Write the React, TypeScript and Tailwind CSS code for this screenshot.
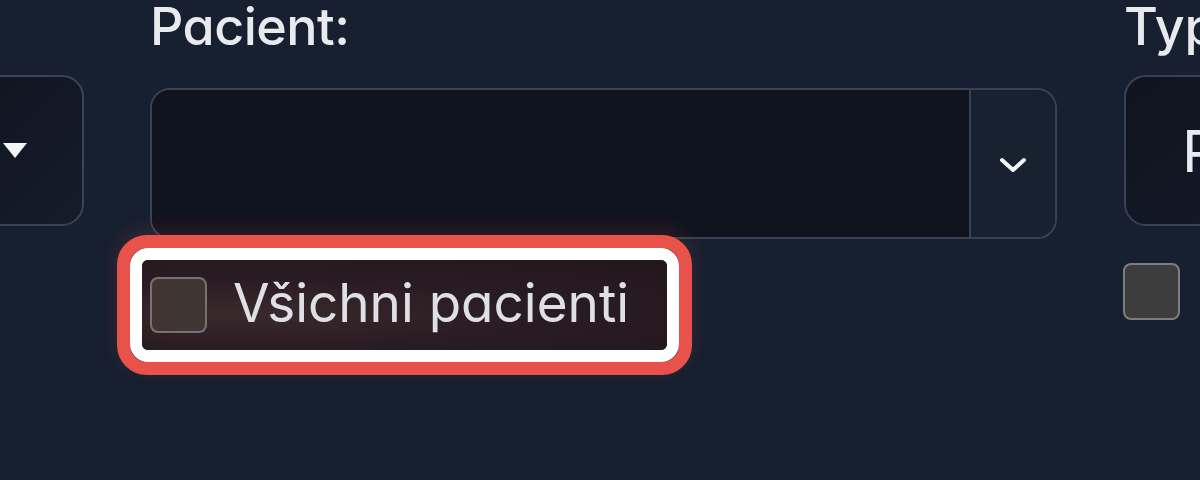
import React from 'react';

const font = "font-['Inter','Liberation_Sans',sans-serif] [font-feature-settings:'cv11']";

const Chevron: React.FC = () => (
  <svg width="28" height="16" viewBox="0 0 28 16" fill="none" aria-hidden="true">
    <path d="M3 3l11 10L25 3" stroke="#f3f4f6" strokeWidth="4" strokeLinecap="round" strokeLinejoin="round" />
  </svg>
);

const Triangle: React.FC = () => (
  <svg width="26" height="17" viewBox="0 0 26 17" aria-hidden="true">
    <path d="M1 1h24L13 16z" fill="#f3f4f6" />
  </svg>
);

const App: React.FC = () => {
  return (
    <div className={`w-[1200px] h-[480px] overflow-hidden bg-[#172030] ${font}`}>
      <div className="flex items-start pt-[4px]">
        {/* left column (cut off) */}
        <div className="shrink-0 -ml-[60px] mt-[71px] w-[144px] h-[151px] rounded-[22px] border-2 border-[#3b4455] bg-gradient-to-br from-[#0f1420] to-[#151c2a] flex items-center justify-end pr-[54px]">
          <Triangle />
        </div>

        {/* patient column */}
        <div className="shrink-0 ml-[66px] w-[907px] flex flex-col">
          <label className="h-[50px] text-[52px] leading-[50px] font-medium text-[#e8eaee] tracking-[-0.5px] -mt-[2px]">
            Pacient:
          </label>
          <div className="mt-[36px] h-[151px] flex rounded-[20px] border-2 border-[#394252] overflow-hidden">
            <div className="flex-1 bg-[#10141f]" />
            <div className="w-[86px] border-l-2 border-[#394252] bg-[#182130] flex items-center justify-center pt-[2px]">
              <Chevron />
            </div>
          </div>

          {/* highlighted checkbox */}
          <div className="-ml-[33px] -mt-[4px] self-start rounded-[30px] border-[13px] border-[#e8524a] shadow-[0_-6px_18px_rgba(232,82,74,0.15)]">
            <div className="rounded-[18px] border-[12px] border-white">
              <div className="w-[525px] h-[90px] rounded-[6px] bg-[radial-gradient(ellipse_at_20%_60%,#3a2a2c,#2a1c23_45%,#22161d)] flex items-center pl-[8px] gap-[26px]">
                <span className="shrink-0 w-[57px] h-[56px] rounded-[8px] border-2 border-[#7b7170] bg-[#3f3633]" />
                <span className="text-[53px] leading-none text-[#dfe0e6] pb-[4px] whitespace-nowrap">Všichni pacienti</span>
              </div>
            </div>
          </div>
        </div>

        {/* type column */}
        <div className="shrink-0 ml-[67px] flex flex-col">
          <label className="h-[50px] text-[52px] leading-[50px] font-medium text-[#e8eaee] whitespace-nowrap -mt-[2px]">
            Typ
          </label>
          <div className="mt-[23px] w-[200px] h-[151px] rounded-[22px] border-2 border-[#394252] bg-gradient-to-br from-[#0f1420] to-[#131a27] flex items-center pl-[56px]">
            <span className="text-[58px] leading-none text-[#e8eaee]">P</span>
          </div>
          <span className="mt-[37px] -ml-[1px] w-[57px] h-[57px] rounded-[8px] border-2 border-[#7d7d7d] bg-[#3d3d3d]" />
        </div>
      </div>
    </div>
  );
};

export default App;
